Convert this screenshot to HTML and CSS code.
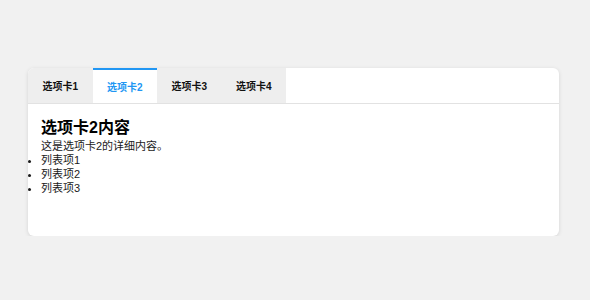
FILE: index.html
```html
<!DOCTYPE html>
<html lang="zh-CN">
  <head>
    <meta charset="UTF-8" />
    <meta name="viewport" content="width=device-width, initial-scale=1.0" />
    <title>选项卡</title>
    <link rel="stylesheet" href="styles.css">
  </head>
  <body>
    <div class="tabs">
      <div class="tab-bar">
        <button class="tab">选项卡1</button>
        <button class="tab active">选项卡2</button>
        <button class="tab">选项卡3</button>
        <button class="tab">选项卡4</button>
      </div>
      <div class="tab-content">
        <h3>选项卡2内容</h3>
        <p>这是选项卡2的详细内容。</p>
        <ul>
          <li>列表项1</li>
          <li>列表项2</li>
          <li>列表项3</li>
        </ul>
      </div>
    </div>
  </body>
</html>
```

FILE: styles.css
```css
:root {
  --page-bg: #f1f1f1;
  --tab-bg: #eeeeee;
  --accent: #2196f3;
  --line: #e2e2e2;
}
body {
  margin: 0;
  padding: 68px 0 0 28px;
  background-color: var(--page-bg);
  font-family: "Liberation Sans", "Noto Sans CJK SC", sans-serif;
  color: #222;
}
.tabs {
  width: 531px;
  background-color: white;
  border-radius: 6px;
  box-shadow: 0 1px 4px rgba(0, 0, 0, 0.12);
  overflow: hidden;
}
.tab-bar {
  display: flex;
  border-bottom: 1px solid var(--line);

  .tab {
    box-sizing: border-box;
    width: 64.5px;
    height: 35px;
    padding: 0;
    border: none;
    background-color: var(--tab-bg);
    font-family: inherit;
    font-size: 10px;
    font-weight: bold;
    color: #111;
    display: flex;
    align-items: center;
    justify-content: center;
  }
  .tab.active {
    background-color: white;
    border-top: 2px solid var(--accent);
    color: var(--accent);
  }
}
.tab-content {
  box-sizing: border-box;
  height: 132px;
  padding: 14px 13px 13px;
  font-size: 11px;
  line-height: 14px;
  color: #1a1a1a;
  h3 {
    margin: 0 0 1px;
    font-size: 16px;
    line-height: 20px;
    color: #000;
  }
  p {
    margin: 0;
  }
  ul {
    margin: 0;
    padding: 0;
  }
}
```
